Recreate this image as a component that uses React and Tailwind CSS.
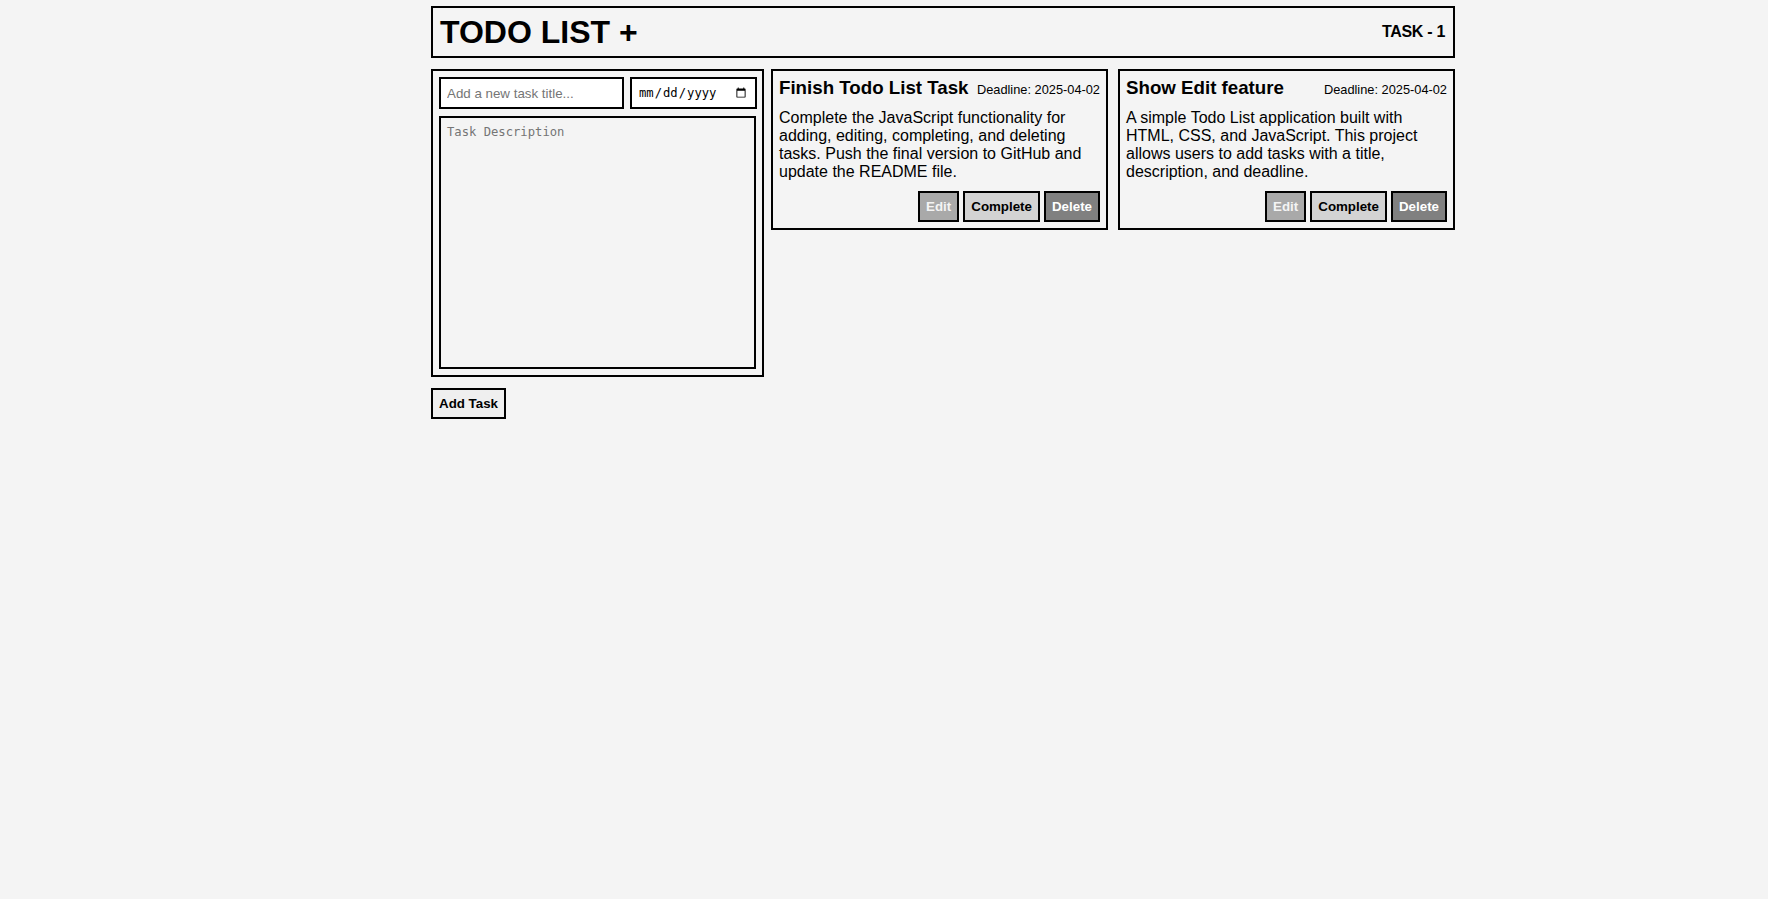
import React from "react";

const tasks = [
  {
    title: "Finish Todo List Task",
    deadline: "2025-04-02",
    desc: "Complete the JavaScript functionality for adding, editing, completing, and deleting tasks. Push the final version to GitHub and update the README file.",
  },
  {
    title: "Show Edit feature",
    deadline: "2025-04-02",
    desc: "A simple Todo List application built with HTML, CSS, and JavaScript. This project allows users to add tasks with a title, description, and deadline.",
  },
];

function TaskCard({ task, className }) {
  return (
    <div className={"w-[337px] border-2 border-black p-[6px] " + className}>
      <div className="flex items-baseline justify-between gap-2">
        <h3 className="text-[18.72px] font-bold leading-[21px]">{task.title}</h3>
        <span className="text-[12.8px] leading-[15px] whitespace-nowrap">Deadline: {task.deadline}</span>
      </div>
      <p className="mt-[11px] text-[16px] leading-[18px]">{task.desc}</p>
      <div className="mt-[10px] flex justify-end gap-[4px]">
        <button className="h-[31px] border-2 border-black bg-[#a9a9a9] px-[6px] text-[13.33px] font-bold text-[#f4f4f4]">Edit</button>
        <button className="h-[31px] border-2 border-black bg-[#d3d3d3] px-[6px] text-[13.33px] font-bold text-black">Complete</button>
        <button className="h-[31px] border-2 border-black bg-[#808080] px-[6px] text-[13.33px] font-bold text-white">Delete</button>
      </div>
    </div>
  );
}

export default function App() {
  return (
    <div className="min-h-[899px] bg-[#f4f4f4] pt-[6px] text-black [font-family:'Liberation_Sans',Arial,sans-serif]">
      <div className="ml-[431px] w-[1024px]">
        <header className="flex h-[52px] items-center justify-between border-2 border-black pl-[7px] pr-[8px]">
          <h1 className="text-[32px] font-bold leading-[37px]">TODO LIST +</h1>
          <span className="text-[16px] font-bold tracking-[-0.3px]">TASK - 1</span>
        </header>
        <div className="mt-[11px] flex items-start">
          <div className="w-[333px]">
            <div className="border-2 border-black p-[6px]">
              <div className="flex gap-[6px]">
                <input
                  type="text"
                  placeholder="Add a new task title..."
                  className="h-[32px] w-[185px] border-2 border-black bg-white px-[6px] text-[13.33px] outline-none placeholder:text-[#757575]"
                />
                <input
                  type="date"
                  className="h-[32px] w-[127px] border-2 border-black bg-white px-[6px] text-[12.2px] outline-none [font-family:'DejaVu_Sans_Mono',monospace]"
                />
              </div>
              <textarea
                placeholder="Task Description"
                className="mt-[7px] block h-[253px] w-full resize-none border-2 border-black bg-transparent px-[6px] pt-[5px] pb-[6px] text-[12.2px] outline-none placeholder:text-[#757575] [font-family:'DejaVu_Sans_Mono',monospace]"
              />
            </div>
            <button className="mt-[11px] h-[31px] border-2 border-black bg-[#efefef] px-[6px] text-[13.33px] font-bold">Add Task</button>
          </div>
          <TaskCard task={tasks[0]} className="ml-[7px]" />
          <TaskCard task={tasks[1]} className="ml-[10px]" />
        </div>
      </div>
    </div>
  );
}
